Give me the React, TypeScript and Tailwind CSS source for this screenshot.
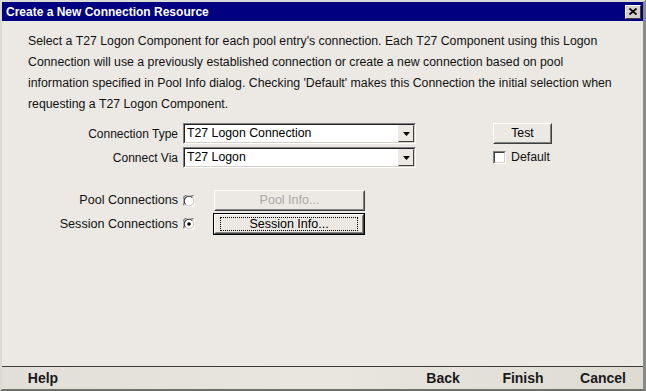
import React from "react";

const font = "font-['Liberation_Sans',Arial,sans-serif]";

function Raised({ children, className = "" }: { children?: React.ReactNode; className?: string }) {
  return (
    <div className={`border border-t-white border-l-white border-b-[#404040] border-r-[#404040] ${className}`}>
      <div className="w-full h-full border border-t-transparent border-l-transparent border-b-[#808080] border-r-[#808080] flex items-center justify-center">
        {children}
      </div>
    </div>
  );
}

function Combo({ value }: { value: string }) {
  return (
    <div className="w-[233px] h-[21px] border border-t-[#808080] border-l-[#808080] border-b-white border-r-white">
      <div className="w-full h-full border border-t-[#202020] border-l-[#202020] border-b-[#d4d0c8] border-r-[#d4d0c8] bg-white flex items-center">
        <span className="flex-1 pl-[2px] text-[12.3px] text-black leading-none">{value}</span>
        <div className="w-[16px] h-full bg-[#ece9e4] border border-t-[#ece9e4] border-l-[#ece9e4] border-b-[#404040] border-r-[#404040] flex items-center justify-center">
          <svg width="7" height="4" viewBox="0 0 7 4">
            <path d="M0 0H7L3.5 4Z" fill="#000" />
          </svg>
        </div>
      </div>
    </div>
  );
}

function Radio({ checked }: { checked?: boolean }) {
  return (
    <svg width="12" height="12" viewBox="0 0 12 12">
      <path d="M10.6 1.4A6.5 6.5 0 0 0 1.4 10.6" stroke="#808080" strokeWidth="1.2" fill="none" />
      <path d="M1.4 10.6A6.5 6.5 0 0 0 10.6 1.4" stroke="#ffffff" strokeWidth="1.2" fill="none" />
      <circle cx="6" cy="6" r="4.6" fill="#fff" />
      <path d="M9.4 2.6A4.8 4.8 0 0 0 2.6 9.4" stroke="#303030" strokeWidth="1.1" fill="none" />
      <path d="M2.6 9.4A4.8 4.8 0 0 0 9.4 2.6" stroke="#d4d0c8" strokeWidth="1.1" fill="none" />
      {checked && <circle cx="6" cy="6" r="1.8" fill="#000" />}
    </svg>
  );
}

export default function App() {
  return (
    <div className={`${font} w-[646px] h-[391px] flex flex-col bg-[#ece9e4] border-t-2 border-l-2 border-b-2 border-r-[3px] border-t-[#dcdad4] border-l-[#dcdad4] border-b-[#6e6e6e] border-r-[#8a8a8a] overflow-hidden`}>
      {/* Title bar */}
      <div className="h-[19px] bg-[#000080] flex items-center justify-between pl-[4px] pr-[2px]">
        <span className="text-white font-bold text-[12px] leading-none">Create a New Connection Resource</span>
        <div className="w-[16px] h-[14px] bg-[#d4d0c8] border border-t-white border-l-white border-b-[#404040] border-r-[#404040] flex items-center justify-center">
          <svg width="8" height="7" viewBox="0 0 8 7">
            <path d="M0.5 0.5L7.5 6.5M7.5 0.5L0.5 6.5" stroke="#000" strokeWidth="1.7" />
          </svg>
        </div>
      </div>

      {/* Content */}
      <div className="flex-1 flex flex-col">
        <p className="pt-[10px] pl-[26px] pr-[30px] text-[12.3px] leading-[21px] text-[#111]">
          Select a T27 Logon Component for each pool entry's connection. Each T27 Component using this Logon Connection will use a previously established connection or create a new connection based on pool information specified in Pool Info dialog. Checking 'Default' makes this Connection the initial selection when requesting a T27 Logon Component.
        </p>

        <div className="mt-[8px] flex items-center h-[21px]">
          <div className="w-[176px] text-right text-[12px] text-[#111]">Connection Type</div>
          <div className="ml-[5px]"><Combo value="T27 Logon Connection" /></div>
          <Raised className="ml-[77px] w-[59px] h-[21px]">
            <span className="text-[12.3px] text-black leading-none">Test</span>
          </Raised>
        </div>

        <div className="mt-[3px] flex items-center h-[21px]">
          <div className="w-[176px] text-right text-[12px] text-[#111]">Connect Via</div>
          <div className="ml-[5px]"><Combo value="T27 Logon" /></div>
          <div className="ml-[77px] flex items-center gap-[5px]">
            <div className="w-[13px] h-[13px] border border-t-[#808080] border-l-[#808080] border-b-white border-r-white">
              <div className="w-full h-full bg-white border border-t-[#404040] border-l-[#404040] border-b-[#d4d0c8] border-r-[#d4d0c8]" />
            </div>
            <span className="text-[12.3px] text-[#111] leading-none">Default</span>
          </div>
        </div>

        <div className="mt-[22px] flex items-center h-[21px]">
          <div className="w-[176px] text-right text-[12.6px] text-[#111]">Pool Connections</div>
          <div className="ml-[5px] flex"><Radio /></div>
          <Raised className="ml-[19px] w-[151px] h-[21px]">
            <span className="text-[12.5px] text-[#a8a8a8] leading-none">Pool Info...</span>
          </Raised>
        </div>

        <div className="mt-[2px] flex items-center h-[22px]">
          <div className="w-[176px] text-right text-[12.6px] text-[#111]">Session Connections</div>
          <div className="ml-[5px] flex"><Radio checked /></div>
          <div className="ml-[18px] w-[152px] h-[22px] border border-black">
            <Raised className="w-full h-full">
              <div className="w-[138px] h-[14px] border border-dotted border-black flex items-center justify-center">
                <span className="text-[12.5px] text-black leading-none">Session Info...</span>
              </div>
            </Raised>
          </div>
        </div>
      </div>

      {/* Footer */}
      <div className="h-px bg-[#3c3c3c]" />
      <div className="h-[22px] bg-gradient-to-r from-[#e2dfd8] via-[#e8e6df] to-[#dedbd3] flex items-center text-[14px] font-bold text-[#1a1a1a]">
        <div className="w-[80px] ml-[1px] text-center">Help</div>
        <div className="flex-1" />
        <div className="w-[80px] text-center">Back</div>
        <div className="w-[80px] text-center">Finish</div>
        <div className="w-[80px] text-center">Cancel</div>
      </div>
    </div>
  );
}
